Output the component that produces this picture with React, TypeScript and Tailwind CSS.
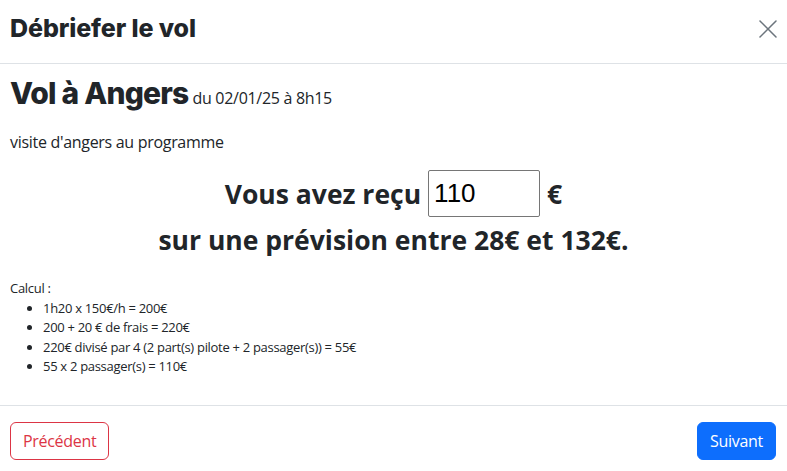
import { X } from 'lucide-react';

const calcLines = [
  '1h20 x 150€/h = 200€',
  '200 + 20 € de frais = 220€',
  '220€ divisé par 4 (2 part(s) pilote + 2 passager(s)) = 55€',
  '55 x 2 passager(s) = 110€',
];

const headingFont = "font-['Inter',sans-serif]";

export default function App() {
  return (
    <div className="flex h-[471px] w-[787px] flex-col bg-white font-['Open_Sans',sans-serif] tracking-[-0.3px] text-[#212529]">
      <DebriefHeader />
      <DebriefBody />
      <DebriefFooter />
    </div>
  );
}

function DebriefHeader() {
  return (
    <header className="flex h-[64px] items-center justify-between border-b border-[#dee2e6] pb-[6px] pl-[10px] pr-[3px]">
      <h1 className={`${headingFont} text-[25px] font-extrabold tracking-[-0.1px]`}>Débriefer le vol</h1>
      <button className="flex h-[32px] w-[32px] items-center justify-center text-[#6c757d]">
        <X size={32} strokeWidth={1.15} />
      </button>
    </header>
  );
}

function DebriefBody() {
  return (
    <main className="flex-1 px-[10px] pt-[7px]">
      <div className="flex items-baseline gap-[4px]">
        <h2 className={`${headingFont} text-[30px] font-extrabold tracking-[-0.8px]`}>Vol à Angers</h2>
        <span className="text-[16px]">du 02/01/25 à 8h15</span>
      </div>
      <p className="mt-[14px] text-[16px]">visite d'angers au programme</p>

      <div className="mt-[16px] flex flex-col items-center text-[26.5px] font-bold leading-[46px] tracking-[0px]">
        <div className="flex items-center gap-[7px]">
          <span>Vous avez reçu</span>
          <input
            defaultValue="110"
            className="h-[47px] w-[112px] rounded-[2px] border border-[#767676] px-[5px] font-['Liberation_Sans',sans-serif] text-[26px] font-normal text-black"
          />
          <span>€</span>
        </div>
        <div>sur une prévision entre 28€ et 132€.</div>
      </div>

      <div className="mt-[16px] text-[13px] leading-[19.5px]">
        <div>Calcul :</div>
        <ul className="list-disc pl-[33px]">
          {calcLines.map((line) => (
            <li key={line}>{line}</li>
          ))}
        </ul>
      </div>
    </main>
  );
}

function DebriefFooter() {
  return (
    <footer className="flex h-[66px] items-start justify-between border-t border-[#dee2e6] pl-[10px] pr-[11px] pt-[16px]">
      <button className="h-[38px] rounded-[6px] border border-[#dc3545] px-[12px] text-[16px] text-[#dc3545]">
        Précédent
      </button>
      <button className="h-[38px] rounded-[6px] border border-[#0d6efd] bg-[#0d6efd] px-[12px] text-[16px] text-white">
        Suivant
      </button>
    </footer>
  );
}
